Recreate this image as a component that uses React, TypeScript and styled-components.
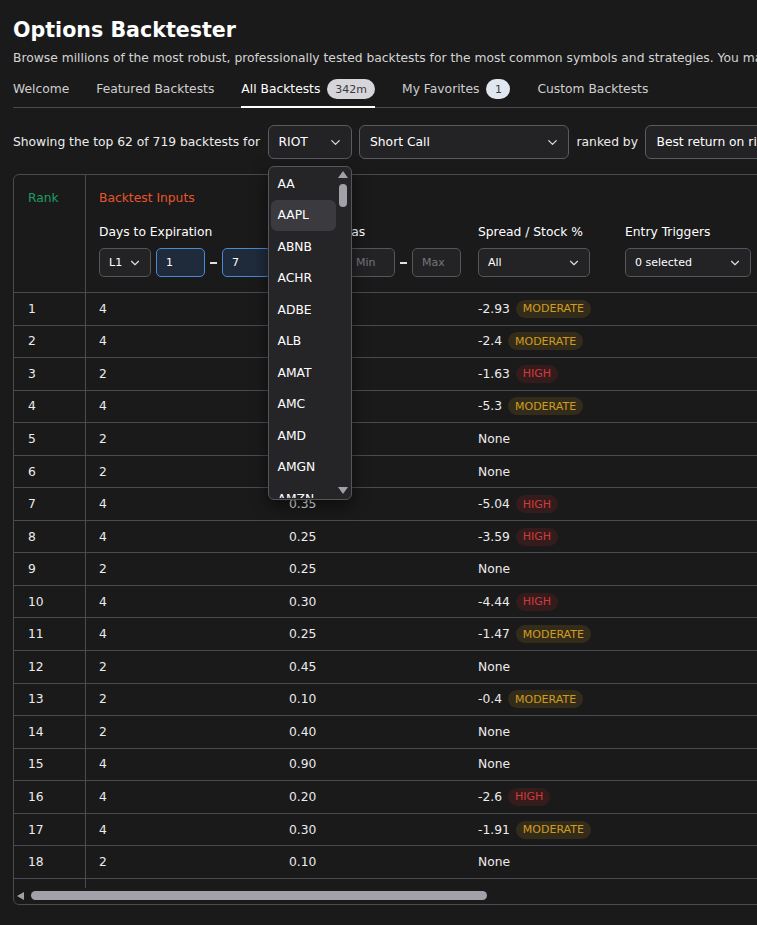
import styled, { createGlobalStyle } from 'styled-components';
import { ChevronDown } from 'lucide-react';

const FONT = `"DejaVu Sans", Verdana, sans-serif`;

const GlobalStyle = createGlobalStyle`
  html, body {
    margin: 0;
    background: #1a1a1b;
    overflow: hidden;
  }
  body {
    font-family: ${FONT};
    font-size: 12.3px;
    color: #e6e6e6;
  }
  * {
    box-sizing: border-box;
  }
`;

type Risk = 'MODERATE' | 'HIGH';

interface Row {
  rank: number;
  dte: number;
  delta: string;
  spread: number | null;
  risk?: Risk;
  ror: string;
  win: string;
}

const rows: Row[] = [
  { rank: 1, dte: 4, delta: '0.30', spread: -2.93, risk: 'MODERATE', ror: '41.2%', win: '88%' },
  { rank: 2, dte: 4, delta: '0.25', spread: -2.4, risk: 'MODERATE', ror: '38.9%', win: '86%' },
  { rank: 3, dte: 2, delta: '0.20', spread: -1.63, risk: 'HIGH', ror: '36.4%', win: '91%' },
  { rank: 4, dte: 4, delta: '0.45', spread: -5.3, risk: 'MODERATE', ror: '35.0%', win: '79%' },
  { rank: 5, dte: 2, delta: '0.15', spread: null, ror: '33.7%', win: '93%' },
  { rank: 6, dte: 2, delta: '0.35', spread: null, ror: '31.8%', win: '84%' },
  { rank: 7, dte: 4, delta: '0.35', spread: -5.04, risk: 'HIGH', ror: '30.9%', win: '82%' },
  { rank: 8, dte: 4, delta: '0.25', spread: -3.59, risk: 'HIGH', ror: '29.5%', win: '87%' },
  { rank: 9, dte: 2, delta: '0.25', spread: null, ror: '28.1%', win: '89%' },
  { rank: 10, dte: 4, delta: '0.30', spread: -4.44, risk: 'HIGH', ror: '27.6%', win: '83%' },
  { rank: 11, dte: 4, delta: '0.25', spread: -1.47, risk: 'MODERATE', ror: '26.2%', win: '86%' },
  { rank: 12, dte: 2, delta: '0.45', spread: null, ror: '25.4%', win: '77%' },
  { rank: 13, dte: 2, delta: '0.10', spread: -0.4, risk: 'MODERATE', ror: '24.8%', win: '95%' },
  { rank: 14, dte: 2, delta: '0.40', spread: null, ror: '23.9%', win: '80%' },
  { rank: 15, dte: 4, delta: '0.90', spread: null, ror: '22.7%', win: '61%' },
  { rank: 16, dte: 4, delta: '0.20', spread: -2.6, risk: 'HIGH', ror: '21.5%', win: '90%' },
  { rank: 17, dte: 4, delta: '0.30', spread: -1.91, risk: 'MODERATE', ror: '20.8%', win: '84%' },
  { rank: 18, dte: 2, delta: '0.10', spread: null, ror: '19.6%', win: '96%' },
  { rank: 19, dte: 4, delta: '0.15', spread: null, ror: '18.9%', win: '92%' },
  { rank: 20, dte: 2, delta: '0.30', spread: null, ror: '18.2%', win: '85%' },
];

const symbols = ['AA', 'AAPL', 'ABNB', 'ACHR', 'ADBE', 'ALB', 'AMAT', 'AMC', 'AMD', 'AMGN', 'AMZN', 'ARM', 'AVGO'];

const tabs = [
  { label: 'Welcome' },
  { label: 'Featured Backtests' },
  { label: 'All Backtests', badge: '342m', active: true },
  { label: 'My Favorites', badge: '1', light: true },
  { label: 'Custom Backtests' },
];

function App() {
  return (
    <>
      <GlobalStyle />
      <Page>
        <Title>Options Backtester</Title>
        <Subtitle>
          Browse millions of the most robust, professionally tested backtests for the most common symbols and
          strategies. You may also run your own.
        </Subtitle>

        <Tabs>
          {tabs.map((t) => (
            <Tab key={t.label} $active={!!t.active}>
              {t.label}
              {t.badge && <TabBadge $light={!!t.light}>{t.badge}</TabBadge>}
            </Tab>
          ))}
        </Tabs>

        <FilterBar>
          <span>Showing the top 62 of 719 backtests for</span>
          <Picker>
            <Select $w={84}>
              RIOT <ChevronDown size={15} strokeWidth={2} />
            </Select>
            <ListPanel>
              <OptionList>
                {symbols.map((s) => (
                  <Option key={s} $hover={s === 'AAPL'}>
                    {s}
                  </Option>
                ))}
              </OptionList>
              <ScrollRail>
                <ArrowUp />
                <RailThumb />
                <ArrowDown />
              </ScrollRail>
            </ListPanel>
          </Picker>
          <Select $w={210}>
            Short Call <ChevronDown size={15} strokeWidth={2} />
          </Select>
          <span>ranked by</span>
          <Select $w={260}>
            Best return on risk <ChevronDown size={15} strokeWidth={2} />
          </Select>
        </FilterBar>

        <TableWrap>
          <Viewport>
            <Table>
              <colgroup>
                <Col $w={72} />
                <Col $w={190} />
                <Col $w={189} />
                <Col $w={147} />
                <Col $w={170} />
                <Col $w={160} />
                <Col $w={140} />
                <Col $w={140} />
              </colgroup>
              <thead>
                <tr>
                  <RankHead rowSpan={2}>Rank</RankHead>
                  <GroupHead colSpan={4} $color="#e8552c">
                    Backtest Inputs
                  </GroupHead>
                  <GroupHead colSpan={3} $color="#4f8fe0">
                    Backtest Results
                  </GroupHead>
                </tr>
                <tr>
                  <FilterHead>
                    <Label>Days to Expiration</Label>
                    <Controls>
                      <MiniSelect $w={52}>
                        L1 <ChevronDown size={14} strokeWidth={2} />
                      </MiniSelect>
                      <Field $focus>1</Field>
                      <Dash />
                      <Field $focus>7</Field>
                    </Controls>
                  </FilterHead>
                  <FilterHead>
                    <Label>Short Deltas</Label>
                    <Controls>
                      <MiniSelect $w={52}>
                        L1 <ChevronDown size={14} strokeWidth={2} />
                      </MiniSelect>
                      <Field $placeholder>Min</Field>
                      <Dash />
                      <Field $placeholder>Max</Field>
                    </Controls>
                  </FilterHead>
                  <FilterHead>
                    <Label>Spread / Stock %</Label>
                    <Controls>
                      <MiniSelect $w={112}>
                        All <ChevronDown size={14} strokeWidth={2} />
                      </MiniSelect>
                    </Controls>
                  </FilterHead>
                  <FilterHead>
                    <Label>Entry Triggers</Label>
                    <Controls>
                      <MiniSelect $w={126}>
                        0 selected <ChevronDown size={14} strokeWidth={2} />
                      </MiniSelect>
                    </Controls>
                  </FilterHead>
                  <FilterHead>
                    <Label>Return on Risk</Label>
                  </FilterHead>
                  <FilterHead>
                    <Label>Win Rate</Label>
                  </FilterHead>
                  <FilterHead>
                    <Label>Trades</Label>
                  </FilterHead>
                </tr>
              </thead>
              <tbody>
                {rows.map((r) => (
                  <tr key={r.rank}>
                    <RankCell>{r.rank}</RankCell>
                    <Cell>{r.dte}</Cell>
                    <Cell>{r.delta}</Cell>
                    <Cell>
                      {r.spread === null ? (
                        'None'
                      ) : (
                        <SpreadValue>
                          {r.spread}
                          {r.risk && <RiskBadge $risk={r.risk}>{r.risk}</RiskBadge>}
                        </SpreadValue>
                      )}
                    </Cell>
                    <Cell />
                    <Cell>{r.ror}</Cell>
                    <Cell>{r.win}</Cell>
                    <Cell>{40 + r.rank * 3}</Cell>
                  </tr>
                ))}
              </tbody>
            </Table>
          </Viewport>
          <HScrollbar>
            <ArrowLeft />
            <HThumb />
          </HScrollbar>
        </TableWrap>
      </Page>
    </>
  );
}

const Page = styled.main`
  width: 830px;
  padding: 17px 0 0 13px;
`;

const Title = styled.h1`
  margin: 0;
  font-size: 20.6px;
  line-height: 26px;
  font-weight: 700;
  color: #ffffff;
`;

const Subtitle = styled.p`
  margin: 7px 0 0;
  line-height: 16px;
  color: #d4d4d4;
  white-space: nowrap;
`;

const Tabs = styled.nav`
  display: flex;
  gap: 27px;
  margin-top: 6px;
  height: 36px;
  border-bottom: 1px solid #4a4a4f;
`;

const Tab = styled.div<{ $active: boolean }>`
  display: flex;
  align-items: center;
  gap: 7px;
  margin-bottom: -1px;
  color: ${(p) => (p.$active ? '#ffffff' : '#cfcfcf')};
  border-bottom: 2px solid ${(p) => (p.$active ? '#ffffff' : 'transparent')};
  white-space: nowrap;
`;

const TabBadge = styled.span<{ $light: boolean }>`
  display: inline-flex;
  align-items: center;
  justify-content: center;
  min-width: 24px;
  height: 20px;
  padding: 0 8px;
  border-radius: 10px;
  font-size: 11px;
  background: ${(p) => (p.$light ? '#e1e7f0' : '#d6d6da')};
  color: #3a3a3e;
`;

const FilterBar = styled.div`
  display: flex;
  align-items: center;
  gap: 7.5px;
  margin-top: 17px;
  color: #ececec;
  white-space: nowrap;
`;

const Picker = styled.div`
  position: relative;
`;

const Select = styled.div<{ $w: number }>`
  display: flex;
  align-items: center;
  justify-content: space-between;
  flex-shrink: 0;
  width: ${(p) => p.$w}px;
  height: 34px;
  padding: 0 8px 0 10px;
  border: 1px solid #5a5a60;
  border-radius: 6px;
  background: #232326;
  color: #ffffff;

  svg {
    color: #dcdcdc;
  }
`;

const ListPanel = styled.div`
  position: absolute;
  top: 41px;
  left: 0;
  z-index: 10;
  display: flex;
  width: 84px;
  height: 334px;
  padding: 1px 0 1px 2px;
  overflow: hidden;
  border: 1px solid #55555b;
  border-radius: 6px;
  background: #252528;
  box-shadow: 0 6px 16px rgba(0, 0, 0, 0.5);
`;

const OptionList = styled.ul`
  flex: 1;
  margin: 0;
  padding: 0;
  list-style: none;
  overflow: hidden;
`;

const Option = styled.li<{ $hover: boolean }>`
  display: flex;
  align-items: center;
  height: 31.5px;
  padding-left: 7px;
  border-radius: 6px;
  color: #ffffff;
  background: ${(p) => (p.$hover ? '#3a3a3f' : 'transparent')};
`;

const ScrollRail = styled.div`
  display: flex;
  flex-direction: column;
  align-items: center;
  width: 15px;
  padding: 3px 0 4px;
`;

const ArrowUp = styled.div`
  width: 0;
  height: 0;
  border-left: 5px solid transparent;
  border-right: 5px solid transparent;
  border-bottom: 7px solid #a1a1aa;
`;

const ArrowDown = styled.div`
  width: 0;
  height: 0;
  margin-top: auto;
  border-left: 5px solid transparent;
  border-right: 5px solid transparent;
  border-top: 7px solid #a1a1aa;
`;

const RailThumb = styled.div`
  width: 8px;
  height: 23px;
  margin-top: 6px;
  border-radius: 4px;
  background: #a1a1aa;
`;

const TableWrap = styled.div`
  display: flex;
  flex-direction: column;
  margin-top: 15px;
  width: 817px;
  height: 731px;
  overflow: hidden;
  border: 1px solid #4a4a4f;
  border-radius: 6px;
`;

const Viewport = styled.div`
  flex: 1;
  min-height: 0;
  overflow: hidden;
`;

const HScrollbar = styled.div`
  display: flex;
  align-items: center;
  gap: 7px;
  height: 16px;
  padding: 0 0 1px 3px;
`;

const ArrowLeft = styled.div`
  width: 0;
  height: 0;
  border-top: 4px solid transparent;
  border-bottom: 4px solid transparent;
  border-right: 7px solid #a1a1aa;
`;

const HThumb = styled.div`
  width: 456px;
  height: 9px;
  border-radius: 5px;
  background: #a1a1aa;
`;

const Table = styled.table`
  width: 1208px;
  table-layout: fixed;
  border-collapse: separate;
  border-spacing: 0;
  font-size: 12.3px;
  color: #ececec;
`;

const Col = styled.col<{ $w: number }>`
  width: ${(p) => p.$w}px;
`;

const RankHead = styled.th`
  vertical-align: top;
  text-align: left;
  padding: 16px 0 0 14px;
  font-weight: 400;
  color: #1f9a62;
  border-right: 1px solid #4a4a4f;
  border-bottom: 1px solid #4a4a4f;
`;

const GroupHead = styled.th<{ $color: string }>`
  text-align: left;
  padding: 16px 13px 0;
  height: 30px;
  font-weight: 400;
  color: ${(p) => p.$color};
  white-space: nowrap;
`;

const FilterHead = styled.th`
  vertical-align: top;
  text-align: left;
  padding: 19px 13px 15px;
  font-weight: 400;
  border-bottom: 1px solid #4a4a4f;
  white-space: nowrap;
`;

const Label = styled.div`
  height: 16px;
  line-height: 16px;
  color: #ffffff;
`;

const Controls = styled.div`
  display: flex;
  align-items: center;
  gap: 5px;
  margin-top: 8px;
`;

const MiniSelect = styled.div<{ $w: number }>`
  display: flex;
  align-items: center;
  justify-content: space-between;
  flex-shrink: 0;
  width: ${(p) => p.$w}px;
  height: 29px;
  padding: 0 8px 0 9px;
  border: 1px solid #55555b;
  border-radius: 5px;
  background: #232326;
  font-size: 11px;
  color: #ffffff;

  svg {
    color: #dcdcdc;
  }
`;

const Field = styled.div<{ $focus?: boolean; $placeholder?: boolean }>`
  display: flex;
  align-items: center;
  flex-shrink: 0;
  width: 49px;
  height: 29px;
  padding-left: 9px;
  border: 1px solid ${(p) => (p.$focus ? '#4a88d4' : '#55555b')};
  border-radius: 5px;
  background: ${(p) => (p.$focus ? '#1f2b3b' : '#232326')};
  font-size: 11px;
  color: ${(p) => (p.$placeholder ? '#75757c' : '#ffffff')};
`;

const Dash = styled.span`
  flex-shrink: 0;
  width: 7px;
  height: 2px;
  background: #e0e0e0;
`;

const Cell = styled.td`
  height: 32.55px;
  padding: 0 13px;
  border-bottom: 1px solid #4a4a4f;
  white-space: nowrap;
`;

const RankCell = styled(Cell)`
  padding-left: 14px;
  border-right: 1px solid #4a4a4f;
`;

const SpreadValue = styled.span`
  display: inline-flex;
  align-items: center;
  gap: 6px;
`;

const RiskBadge = styled.span<{ $risk: Risk }>`
  display: inline-flex;
  align-items: center;
  height: 18px;
  padding: 0 7px;
  border-radius: 9px;
  font-size: 11px;
  color: ${(p) => (p.$risk === 'HIGH' ? '#d23a3a' : '#d19c1d')};
  background: ${(p) => (p.$risk === 'HIGH' ? 'rgba(210, 40, 40, 0.14)' : 'rgba(209, 156, 29, 0.14)')};
`;

export default App;
